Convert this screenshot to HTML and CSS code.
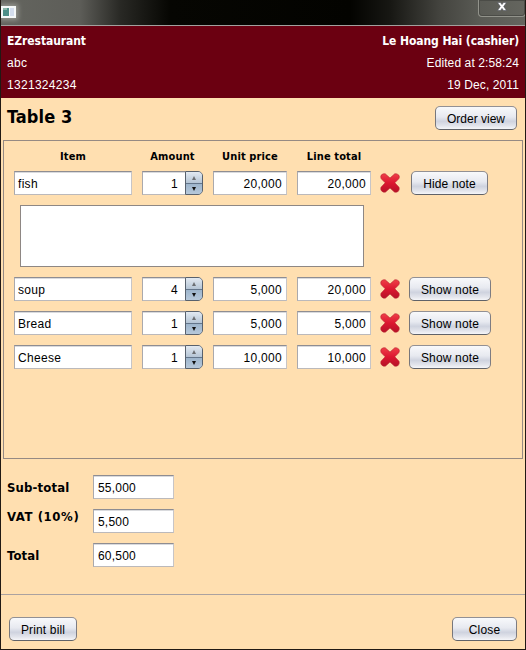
FILE: index.html
```html
<!DOCTYPE html>
<html lang="en">
<head>
<meta charset="utf-8">
<title>EZrestaurant</title>
<link rel="stylesheet" href="styles.css">
</head>
<body>
<svg class="defs" width="0" height="0" aria-hidden="true">
  <defs>
    <linearGradient id="red" x1="0" y1="0" x2="0" y2="1"><stop offset="0" stop-color="#ef4048"/><stop offset=".5" stop-color="#dc1730"/><stop offset="1" stop-color="#b51227"/></linearGradient>
    <symbol id="cross" viewBox="0 0 20 20"><path d="M5.2.8 10 5 14.8.8Q17 .2 18.9 2.2 19.9 4 18.8 5.7L14.8 9.8 19 14.2Q19.9 16.4 18.3 18.3 16.5 19.8 14.4 19L10 15 5.6 19Q3.3 19.8 1.6 18 .2 16.2 1 14.2L5.2 9.8 1.2 5.7Q.2 4 1.2 2.1 3 .2 5.2.8Z" fill="url(#red)" stroke="#b92231" stroke-width=".6"/></symbol>
  </defs>
</svg>
<div class="window">
  <div class="titlebar">
    <svg class="app-icon" width="15" height="12" viewBox="0 0 15 12"><path fill="#f4f8f8" d="M0 0h15v12H0z"/><path fill="#4d8f88" d="M2 2h6v8H2z"/><path fill="#8bb7a9" d="M2 2h4v2H2z"/><path fill="#d3dded" d="M9 2h4v8H9z"/></svg>
    <div class="win-close"><svg width="10" height="9" viewBox="0 0 10 9"><path d="M.5.5h3L5 2.6 6.5.5h3L6.7 4.5l2.8 4h-3L5 6.4 3.5 8.5h-3l2.8-4z" fill="#fff" stroke="#4e505a" stroke-width=".6"/></svg></div>
  </div>
  <header class="header">
    <div><p class="strong name">EZrestaurant</p><p>abc</p><p>1321324234</p></div>
    <div class="right"><p class="strong user">Le Hoang Hai (cashier)</p><p>Edited at 2:58:24</p><p>19 Dec, 2011</p></div>
  </header>
  <div class="heading"><h1>Table 3</h1><button class="btn order">Order view</button></div>
  <main class="panel">
    <div class="row labels"><span>Item</span><span>Amount</span><span>Unit price</span><span>Line total</span></div>
    <div class="row">
      <div class="field">fish</div><div class="stepper"><div class="field num">1</div><div class="spin"><i class="up"></i><i class="down"></i></div></div><div class="field num">20,000</div><div class="field num">20,000</div><svg class="cross"><use href="#cross"/></svg><button class="btn hide">Hide note</button>
    </div>
    <div class="note"></div>
    <div class="row">
      <div class="field">soup</div><div class="stepper"><div class="field num">4</div><div class="spin"><i class="up"></i><i class="down"></i></div></div><div class="field num">5,000</div><div class="field num">20,000</div><svg class="cross"><use href="#cross"/></svg><button class="btn show">Show note</button>
    </div>
    <div class="row">
      <div class="field">Bread</div><div class="stepper"><div class="field num">1</div><div class="spin"><i class="up"></i><i class="down"></i></div></div><div class="field num">5,000</div><div class="field num">5,000</div><svg class="cross"><use href="#cross"/></svg><button class="btn show">Show note</button>
    </div>
    <div class="row">
      <div class="field">Cheese</div><div class="stepper"><div class="field num">1</div><div class="spin"><i class="up"></i><i class="down"></i></div></div><div class="field num">10,000</div><div class="field num">10,000</div><svg class="cross"><use href="#cross"/></svg><button class="btn show">Show note</button>
    </div>
  </main>
  <section class="totals">
    <span class="sub">Sub-total</span><div class="field">55,000</div>
    <span class="vat">VAT (10%)</span><div class="field">5,500</div>
    <span class="tot">Total</span><div class="field">60,500</div>
  </section>
  <footer class="footer"><button class="btn print">Print bill</button><button class="btn close">Close</button></footer>
</div>
</body>
</html>
```
FILE: styles.css
```css
* { box-sizing: border-box; }
body { margin: 0; font: 12px/22px "Liberation Sans", Arial, sans-serif; letter-spacing: .3px; color: #000; }
p, h1 { margin: 0; }
.defs { display: block; height: 0; }
.window { width: 526px; height: 650px; display: flex; flex-direction: column; background: #ffdfb0; border: solid #211914; border-width: 0 1px 1px; overflow: hidden; }
.titlebar { height: 26px; margin: 0 -1px; flex: none; display: flex; justify-content: space-between; align-items: flex-start; border-bottom: 1px solid #a3a09e; background: linear-gradient(90deg, #64655f 0, #5d5d58 80px, #292925 120px, #060602 170px, #030300 350px, #171713 390px, #44443f 440px, #5a5b55 480px, #65665f 526px); }
.app-icon { margin: 6px 0 0 1px; box-shadow: 0 0 5px 2px #969891; }
.win-close { width: 48px; height: 17px; margin-right: 0; display: flex; justify-content: center; padding-top: 2px; border: 1px solid #92938b; border-top: 0; border-radius: 0 0 4px 4px; box-shadow: inset 0 0 0 1px #4b4c47; }
.header { flex: none; height: 72px; padding: 4px 6px 0; display: flex; justify-content: space-between; background: #6b0011; color: #fff; }
.right { text-align: right; }
.right p { letter-spacing: .1px; }
.strong, h1, .labels, .totals span { font-family: "DejaVu Sans Condensed", "DejaVu Sans", sans-serif; font-weight: 700; font-stretch: condensed; letter-spacing: 0; }
.heading { flex: none; height: 42px; padding: 8px 8px 0 6px; display: flex; justify-content: space-between; }
h1 { font-size: 18px; line-height: 22px; letter-spacing: .1px; }
.btn { flex: none; height: 24px; padding: 1px 0 0; font: 12px "Liberation Sans", Arial, sans-serif; letter-spacing: .15px; color: #000; border: 1px solid; border-color: #929094 #7d7c82 #606268 #77777c; border-radius: 5px; background: linear-gradient(#f8f9fb, #e7e9f0 45%, #cfd3df 65%, #e2e4eb 85%, #f5f6f9); }
.order { width: 82px; letter-spacing: 0; }
.panel { flex: none; height: 319px; width: 520px; margin-left: 2px; padding: 5px 0 0 10px; border: 1px solid #968a83; }
.row { display: grid; grid-template-columns: 118px 61px 74px 74px 20px auto; column-gap: 10px; justify-content: start; height: 24px; margin-bottom: 10px; }
.labels { height: 20px; margin-bottom: 5px; font-size: 11px; line-height: 21px; text-align: center; letter-spacing: .12px; }
.field { height: 24px; padding: 1px 5px 0 3px; line-height: 22px; background: #fff; border: 1px solid; border-color: #8e8d92 #c7c5c7 #bbb9bb #aaa9ad; box-shadow: inset 0 1px #d9dadd; white-space: nowrap; }
.num { text-align: right; padding-right: 4px; }
.stepper { display: grid; grid-template-columns: 43px 18px; }
.stepper .num { border-right: 0; padding-right: 7px; }
.spin { display: grid; grid-template-rows: 11px 11px; border: 1px solid #58616d; border-radius: 0 5px 5px 0; background: #a4b7cc; overflow: hidden; }
.spin i { display: flex; align-items: center; justify-content: center; background: linear-gradient(#e2e9f1, #b5c5d5); }
.spin i::after { content: ""; border: solid transparent; border-width: 0 2.5px 4px; border-bottom-color: #6c6f73; }
.spin .down { border-top: 1px solid #64768b; background: linear-gradient(#9db5cc, #b6c8da); }
.spin .down::after { border-width: 4px 2.5px 0; border-top-color: #111; }
.cross { width: 20px; height: 20px; margin: 2px 0 0; }
.hide { width: 77px; }
.show { width: 82px; margin-left: -2px; }
.note { width: 344px; height: 62px; margin: 0 0 10px 6px; background: #fff; border: 1px solid #8e8784; }
.row .cross { margin-left: -1px; }
.totals { flex: none; display: grid; grid-template-columns: 86px 81px; row-gap: 10px; margin: 16px 0 0 6px; height: 119px; grid-auto-rows: 24px; }
.totals span { font-size: 13px; line-height: 25px; white-space: nowrap; letter-spacing: .15px; }
.totals .vat { margin-top: -5px; letter-spacing: .6px; }
.totals .field { padding-left: 4px; letter-spacing: .2px; }
.footer { flex: 1; padding: 22px 8px 0; border-top: 1px solid #aba2a0; display: flex; justify-content: space-between; }
.print { width: 68px; }
.close { width: 65px; }
.name { letter-spacing: -.08px; }
.right .user { letter-spacing: -.09px; }
```
